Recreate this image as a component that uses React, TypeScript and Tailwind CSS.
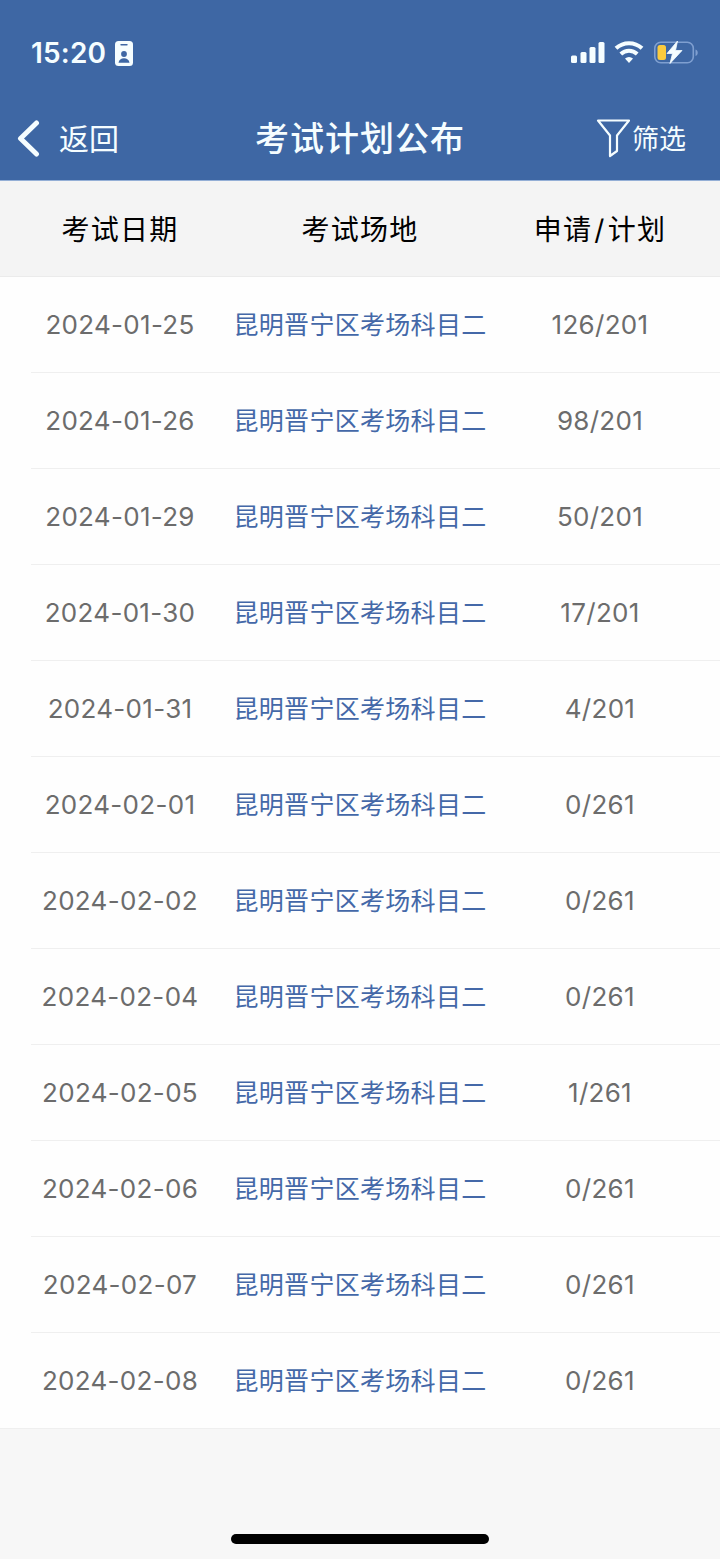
const plans = [
  { date: "2024-01-25", place: "昆明晋宁区考场科目二", count: "126/201" },
  { date: "2024-01-26", place: "昆明晋宁区考场科目二", count: "98/201" },
  { date: "2024-01-29", place: "昆明晋宁区考场科目二", count: "50/201" },
  { date: "2024-01-30", place: "昆明晋宁区考场科目二", count: "17/201" },
  { date: "2024-01-31", place: "昆明晋宁区考场科目二", count: "4/201" },
  { date: "2024-02-01", place: "昆明晋宁区考场科目二", count: "0/261" },
  { date: "2024-02-02", place: "昆明晋宁区考场科目二", count: "0/261" },
  { date: "2024-02-04", place: "昆明晋宁区考场科目二", count: "0/261" },
  { date: "2024-02-05", place: "昆明晋宁区考场科目二", count: "1/261" },
  { date: "2024-02-06", place: "昆明晋宁区考场科目二", count: "0/261" },
  { date: "2024-02-07", place: "昆明晋宁区考场科目二", count: "0/261" },
  { date: "2024-02-08", place: "昆明晋宁区考场科目二", count: "0/261" },
];

function StatusBar() {
  return (
    <div className="flex h-[97px] items-start justify-between pt-[39px] pr-[21px] pl-[31px]">
      <div className="flex h-7 items-center">
        <span className="w-[84px] text-[28px] font-semibold leading-7 tracking-[0.2px]">15:20</span>
        <svg width="18" height="25" viewBox="0 0 18 25" fill="none">
          <rect width="18" height="25" rx="3.5" fill="#f5fdff" />
          <path d="M6 3.7h6" stroke="#3e67a4" strokeWidth="1.4" strokeLinecap="round" />
          <circle cx="9" cy="13" r="2.9" fill="#3e67a4" />
          <path d="M3.5 21.8c.4-3 2.6-4.5 5.5-4.5s5.1 1.5 5.5 4.5z" fill="#3e67a4" />
        </svg>
      </div>
      <svg className="h-7 w-32" viewBox="571 39 128 28" fill="none">
        <g fill="#f5fdff">
          <rect x="571" y="55.5" width="6" height="7.5" rx="1.5" />
          <rect x="580.5" y="52" width="6" height="11" rx="1.5" />
          <rect x="589.5" y="47" width="6" height="16" rx="1.5" />
          <rect x="598.5" y="42" width="6" height="21" rx="1.5" />
        </g>
        <g stroke="#f5fdff" strokeWidth="4">
          <path d="M616 48.3a19 19 0 0 1 26 0" />
          <path d="M620.8 54a12 12 0 0 1 16.4 0" />
        </g>
        <path d="M625 58.5a6 6 0 0 1 8 0l-4 4.5z" fill="#f5fdff" />
        <rect x="654.8" y="42.3" width="38.5" height="20.5" rx="6" stroke="#7f9fd0" strokeWidth="1.6" />
        <path d="M695.5 49.5c3 1 3 5.5 0 6.5z" fill="#7f9fd0" />
        <rect x="657.5" y="45" width="8.5" height="15" rx="2.5" fill="#fbcb3e" />
        <path d="M677.5 41 667 53.5h5.5L670 63.5 682 50.5h-6.5z" fill="#f5fdff" stroke="#f5fdff" strokeWidth="0.8" strokeLinejoin="round" />
      </svg>
    </div>
  );
}

function NavBar() {
  return (
    <div className="grid h-[83px] grid-cols-3 items-center">
      <button className="flex items-center pl-[16px]">
        <svg width="24" height="38" viewBox="0 0 24 38" fill="none" stroke="#f5fdff" strokeWidth="5" strokeLinecap="round" strokeLinejoin="round">
          <path d="M20.5 3 4.5 18.5l16 15.5" />
        </svg>
        <span className="ml-[19px] text-[30px] leading-none">返回</span>
      </button>
      <h1 className="text-center text-[34px] font-medium leading-none tracking-[1px] whitespace-nowrap">考试计划公布</h1>
      <button className="flex items-center justify-end pr-[34px]">
        <svg className="mr-px" width="35" height="40" viewBox="0 0 35 40" fill="none" stroke="#f5fdff" strokeWidth="2.2" strokeLinejoin="round">
          <path d="M2 1.5h31L21 16.5V32l-7 5V16.5z" />
        </svg>
        <span className="pt-px text-[27px] leading-none">筛选</span>
      </button>
    </div>
  );
}

export default function App() {
  return (
    <div className="flex h-[1559px] w-[720px] flex-col bg-[#f7f7f7] font-['Inter','Noto_Sans_CJK_SC',sans-serif]">
      <header className="h-[180px] bg-[#3e67a4] text-[#f5fdff]">
        <StatusBar />
        <NavBar />
      </header>

      <div className="grid h-[97px] grid-cols-3 items-center border-t border-b border-t-[#94afd6] border-b-[#ebebeb] bg-[#f4f4f4] pt-0.5 text-center text-[28px] tracking-[1.3px] text-black">
        <span>考试日期</span>
        <span>考试场地</span>
        <span>申请<span className="mx-0.5">/</span>计划</span>
      </div>

      <ul className="bg-[#fefefe]">
        {plans.map((plan) => (
          <li key={plan.date} className="group">
            <div className="grid h-[95px] grid-cols-3 items-center text-center text-[26px] tracking-[0.3px] text-[#6c6c6c]">
              <span>{plan.date}</span>
              <span className="-mx-4 pt-0.5 text-[25px] whitespace-nowrap text-[#4468a8]">{plan.place}</span>
              <span>{plan.count}</span>
            </div>
            <div className="ml-[31px] h-px bg-[#efefef] group-last:ml-0" />
          </li>
        ))}
      </ul>

      <div className="mx-auto mt-auto mb-[15px] h-[10px] w-[258px] rounded-full bg-black" />
    </div>
  );
}
